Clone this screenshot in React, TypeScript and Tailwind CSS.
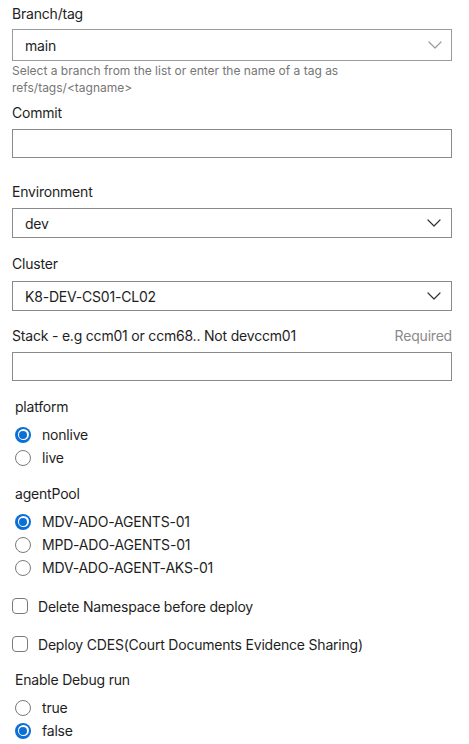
import { useState } from "react";

const font = { fontFamily: "Inter, 'Noto Sans', sans-serif" };

function Chevron({ light }: { light?: boolean }) {
  return (
    <svg width="14" height="8" viewBox="0 0 14 8" fill="none">
      <path
        d="M1 1l6 6 6-6"
        stroke={light ? "#9a9a9a" : "#333333"}
        strokeWidth="1.2"
        strokeLinecap="round"
        strokeLinejoin="round"
      />
    </svg>
  );
}

function Radio({ checked }: { checked: boolean }) {
  if (checked) {
    return (
      <span className="w-4 h-4 rounded-full bg-[#0b6fd6] flex items-center justify-center shrink-0">
        <span className="w-[11px] h-[11px] rounded-full bg-white flex items-center justify-center">
          <span className="w-[8px] h-[8px] rounded-full bg-[#0b6fd6]" />
        </span>
      </span>
    );
  }
  return <span className="w-4 h-4 rounded-full border border-[#7a7a7a] bg-white shrink-0" />;
}

function RadioGroup({
  label,
  options,
  value,
  onChange,
}: {
  label: string;
  options: string[];
  value: string;
  onChange: (v: string) => void;
}) {
  return (
    <div className="pl-[3px]">
      <div className="h-5 leading-5 text-[14px] tracking-[-0.2px] text-[#1e1e1e]">{label}</div>
      <div className="mt-[6px]">
        {options.map((o) => (
          <div
            key={o}
            className="h-[23px] flex items-center gap-[11px] cursor-pointer"
            onClick={() => onChange(o)}
          >
            <Radio checked={value === o} />
            <span className="text-[14px] tracking-[-0.2px] text-[#1e1e1e]">{o}</span>
          </div>
        ))}
      </div>
    </div>
  );
}

function Checkbox({ label }: { label: string }) {
  const [on, setOn] = useState(false);
  return (
    <div className="h-[22px] flex items-center gap-[10px] cursor-pointer" onClick={() => setOn(!on)}>
      <span
        className={
          on
            ? "w-4 h-4 rounded-[4px] bg-[#0b6fd6] border border-[#0b6fd6] shrink-0"
            : "w-4 h-4 rounded-[4px] border border-[#7a7a7a] bg-white shrink-0"
        }
      />
      <span className="text-[14px] tracking-[-0.2px] text-[#1e1e1e]">{label}</span>
    </div>
  );
}

export default function App() {
  const [platform, setPlatform] = useState("nonlive");
  const [pool, setPool] = useState("MDV-ADO-AGENTS-01");
  const [debug, setDebug] = useState("false");

  return (
    <div className="w-[469px] min-h-[744px] bg-white pl-3 pr-[17px] pt-1" style={font}>
      {/* Branch/tag */}
      <div className="h-5 leading-5 text-[14px] tracking-[-0.2px] text-[#1e1e1e]">Branch/tag</div>
      <div className="mt-[5px] h-8 border border-[#9a9a9a] flex items-center justify-between pl-3 pr-[9px]">
        <span className="text-[14px] tracking-[-0.2px] text-[#1e1e1e]">main</span>
        <Chevron light />
      </div>
      <p className="mt-[1px] text-[12px] leading-[17px] text-[#767676] pr-[95px]">
        Select a branch from the list or enter the name of a tag as refs/tags/&lt;tagname&gt;
      </p>

      {/* Commit */}
      <div className="mt-[7px] h-5 leading-5 text-[14px] tracking-[-0.2px] text-[#1e1e1e]">Commit</div>
      <input className="mt-[6px] block w-full h-[29px] border border-[#8a8a8a] px-3 text-[14px] outline-none" />

      {/* Environment */}
      <div className="mt-[24px] h-5 leading-5 text-[14px] tracking-[-0.2px] text-[#1e1e1e]">Environment</div>
      <div className="mt-[6px] h-[30px] border border-[#8a8a8a] flex items-center justify-between pl-3 pr-[10px]">
        <span className="text-[14px] tracking-[-0.2px] text-[#1e1e1e]">dev</span>
        <Chevron />
      </div>

      {/* Cluster */}
      <div className="mt-[16px] h-5 leading-5 text-[14px] tracking-[-0.2px] text-[#1e1e1e]">Cluster</div>
      <div className="mt-[7px] h-[30px] border border-[#8a8a8a] flex items-center justify-between pl-3 pr-[10px]">
        <span className="text-[14px] tracking-[-0.2px] text-[#1e1e1e]">K8-DEV-CS01-CL02</span>
        <Chevron />
      </div>

      {/* Stack */}
      <div className="mt-[15px] h-5 leading-5 text-[14px] tracking-[-0.2px] flex justify-between">
        <span className="text-[#1e1e1e]">Stack - e.g ccm01 or ccm68.. Not devccm01</span>
        <span className="text-[#8a8a8a]">Required</span>
      </div>
      <input className="mt-[6px] block w-full h-[29px] border border-[#8a8a8a] px-3 text-[14px] outline-none" />

      <div className="mt-[16px]">
        <RadioGroup label="platform" options={["nonlive", "live"]} value={platform} onChange={setPlatform} />
      </div>

      <div className="mt-[15px]">
        <RadioGroup
          label="agentPool"
          options={["MDV-ADO-AGENTS-01", "MPD-ADO-AGENTS-01", "MDV-ADO-AGENT-AKS-01"]}
          value={pool}
          onChange={setPool}
        />
      </div>

      <div className="mt-[16px]">
        <Checkbox label="Delete Namespace before deploy" />
      </div>
      <div className="mt-[16px]">
        <Checkbox label="Deploy CDES(Court Documents Evidence Sharing)" />
      </div>

      <div className="mt-[15px]">
        <RadioGroup label="Enable Debug run" options={["true", "false"]} value={debug} onChange={setDebug} />
      </div>
    </div>
  );
}
